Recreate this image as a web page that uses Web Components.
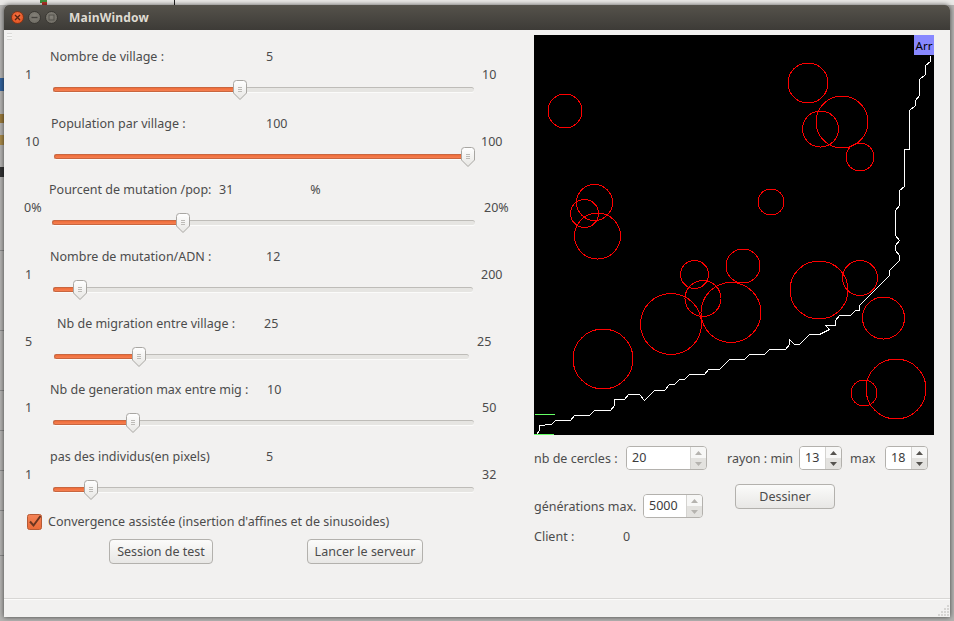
<!DOCTYPE html>
<html lang="fr">
<head>
<meta charset="utf-8">
<title>MainWindow</title>
<style>
  html, body { margin: 0; height: 100%; }
  body {
    background: #b4b3b1;
    overflow: hidden;
    font-family: "Noto Sans", "Open Sans", sans-serif;
    font-size: 12.5px;
    color: #4c4c4c;
  }
</style>
</head>
<body>
<desk-bits></desk-bits>
<app-window>
  <title-bar slot="title">MainWindow</title-bar>

  <slider-row slot="left" style="--lx:46px;--vx:262px;--mx:21px;--xx:478px;--tl:49px;--tw:421px;--th:187px">
    <span slot="label">Nombre de village :</span><span slot="value">5</span>
    <span slot="min">1</span><span slot="max">10</span>
  </slider-row>
  <slider-row slot="left" style="--lx:47px;--vx:262px;--mx:21px;--xx:477px;--tl:50px;--tw:420px;--th:414px">
    <span slot="label">Population par village :</span><span slot="value">100</span>
    <span slot="min">10</span><span slot="max">100</span>
  </slider-row>
  <slider-row slot="left" style="--lx:45px;--vx:215px;--ux:77px;--mx:20px;--xx:480px;--tl:48px;--tw:423px;--th:131px">
    <span slot="label">Pourcent de mutation /pop:</span><span slot="value">31</span><span slot="unit">%</span>
    <span slot="min">0%</span><span slot="max">20%</span>
  </slider-row>
  <slider-row slot="left" style="--lx:46px;--vx:262px;--mx:21px;--xx:477px;--tl:49px;--tw:420px;--th:27px">
    <span slot="label">Nombre de mutation/ADN :</span><span slot="value">12</span>
    <span slot="min">1</span><span slot="max">200</span>
  </slider-row>
  <slider-row slot="left" style="--lx:53px;--vx:260px;--mx:21px;--xx:473px;--tl:50px;--tw:415px;--th:85px">
    <span slot="label">Nb de migration entre village :</span><span slot="value">25</span>
    <span slot="min">5</span><span slot="max">25</span>
  </slider-row>
  <slider-row slot="left" style="--lx:46px;--vx:263px;--mx:21px;--xx:478px;--tl:49px;--tw:421px;--th:80px">
    <span slot="label">Nb de generation max entre mig :</span><span slot="value">10</span>
    <span slot="min">1</span><span slot="max">50</span>
  </slider-row>
  <slider-row slot="left" style="--lx:46px;--vx:262px;--mx:21px;--xx:478px;--tl:49px;--tw:421px;--th:38px">
    <span slot="label">pas des individus(en pixels)</span><span slot="value">5</span>
    <span slot="min">1</span><span slot="max">32</span>
  </slider-row>

  <check-box slot="left">Convergence assistée (insertion d'affines et de sinusoides)</check-box>
  <button-row slot="left">
    <gtk-button style="width:104px">Session de test</gtk-button>
    <gtk-button style="width:116px;margin-left:94px">Lancer le serveur</gtk-button>
  </button-row>

  <maze-canvas slot="right"></maze-canvas>
  <control-panel slot="right"></control-panel>
</app-window>

<script>
class DeskBits extends HTMLElement {
  constructor() {
    super();
    this.attachShadow({ mode: "open" });
    const bits = [
      [0, 0, 954, 5, "#e9e8e6"], [40, 0, 7, 3, "#3f8f3a"], [42, 2, 5, 3, "#b8342a"], [174, 0, 1, 5, "#222"],
      [0, 78, 4, 13, "#33629c"], [0, 114, 4, 9, "#9a7a3c"], [0, 135, 4, 10, "#a88a4a"], [0, 167, 4, 10, "#333"],
      [0, 250, 4, 1, "#8a8a8a"], [0, 330, 4, 1, "#8a8a8a"], [0, 390, 4, 1, "#8a8a8a"], [0, 430, 4, 1, "#8a8a8a"],
      [0, 470, 4, 1, "#8a8a8a"], [0, 510, 4, 1, "#8a8a8a"], [0, 555, 4, 1, "#8a8a8a"]
    ];
    this.shadowRoot.innerHTML = `
      <style>
        :host { position: absolute; inset: 0; display: block; }
        i { position: absolute; display: block; }
      </style>
      ${bits.map(b => `<i style="left:${b[0]}px;top:${b[1]}px;width:${b[2]}px;height:${b[3]}px;background:${b[4]}"></i>`).join("")}
    `;
  }
}

class AppWindow extends HTMLElement {
  constructor() {
    super();
    this.attachShadow({ mode: "open" });
    this.shadowRoot.innerHTML = `
      <style>
        :host {
          position: absolute;
          left: 4px;
          top: 5px;
          width: 946px;
          height: 612px;
          display: flex;
          flex-direction: column;
          background: #f2f1f0;
          border-radius: 5px 5px 0 0;
          box-shadow: 0 0 5px rgba(0, 0, 0, 0.65);
        }
        .Main {
          flex: 1;
          display: grid;
          grid-template-columns: 530px 1fr;
          position: relative;
        }
        .Left { padding-top: 17px; display: flex; flex-direction: column; }
        .Right { padding-top: 5px; display: flex; flex-direction: column; }
        .Handle {
          position: absolute;
          left: 3px;
          top: 3px;
          width: 5px;
          height: 7px;
          background: repeating-linear-gradient(#dcdbd9 0 1px, #f7f7f6 1px 3px);
        }
        .Status {
          height: 18px;
          border-top: 1px solid #d8d7d5;
          box-shadow: inset 0 1px 0 #fbfbfa;
          position: relative;
        }
        .Grip { position: absolute; right: 1px; bottom: 1px; }
      </style>
      <slot name="title"></slot>
      <div class="Main">
        <div class="Handle"></div>
        <div class="Left"><slot name="left"></slot></div>
        <div class="Right"><slot name="right"></slot></div>
      </div>
      <div class="Status">
        <svg class="Grip" width="12" height="12" fill="#d6d5d3">
          <rect x="10" y="1" width="2" height="2"/><rect x="10" y="4" width="2" height="2"/><rect x="7" y="4" width="2" height="2"/>
          <rect x="10" y="7" width="2" height="2"/><rect x="7" y="7" width="2" height="2"/><rect x="4" y="7" width="2" height="2"/>
          <rect x="10" y="10" width="2" height="2"/><rect x="7" y="10" width="2" height="2"/><rect x="4" y="10" width="2" height="2"/><rect x="1" y="10" width="2" height="2"/>
        </svg>
      </div>
    `;
  }
}

class TitleBar extends HTMLElement {
  constructor() {
    super();
    this.attachShadow({ mode: "open" });
    this.shadowRoot.innerHTML = `
      <style>
        :host {
          display: flex;
          align-items: center;
          height: 25px;
          padding-left: 7px;
          background: linear-gradient(#55524b, #3d3b37);
          border-radius: 5px 5px 0 0;
          color: #dfdbd2;
          font: bold 12px "Noto Sans", sans-serif;
          letter-spacing: 0.2px;
          box-sizing: border-box;
        }
        .Btn {
          width: 13px;
          height: 13px;
          border-radius: 50%;
          margin-right: 4px;
          box-sizing: border-box;
          display: grid;
          place-items: center;
          background: radial-gradient(circle at 50% 40%, #85827a, #6a675f);
          border: 1px solid #3a3833;
        }
        .Close { background: radial-gradient(circle at 50% 40%, #f5774a, #dd4814); border-color: #7f3519; }
        .Max { margin-right: 11px; }
        svg { display: block; }
      </style>
      <span class="Btn Close">
        <svg width="7" height="7" stroke="#5a2410" stroke-width="1.4"><path d="M1 1L6 6M6 1L1 6"/></svg>
      </span>
      <span class="Btn">
        <svg width="7" height="7" stroke="#45433e" stroke-width="1.4"><path d="M0.5 3.5H6.5"/></svg>
      </span>
      <span class="Btn Max">
        <svg width="7" height="7" fill="none" stroke="#55534c" stroke-width="1"><rect x="1" y="1" width="5" height="5"/></svg>
      </span>
      <slot></slot>
    `;
  }
}

class SliderRow extends HTMLElement {
  constructor() {
    super();
    this.attachShadow({ mode: "open" });
    this.shadowRoot.innerHTML = `
      <style>
        :host {
          display: block;
          height: 66.67px;
          box-sizing: border-box;
        }
        .Head, .Range {
          display: flex;
          height: 18px;
          line-height: 18px;
          white-space: nowrap;
        }
        .Head { padding: 1px 0 0 var(--lx); }
        .Label { width: calc(var(--vx) - var(--lx)); flex: none; }
        .Unit { margin-left: var(--ux, 0); }
        .Range { padding-left: var(--mx); }
        .Min { width: calc(var(--xx) - var(--mx)); flex: none; }
        gtk-slider { margin: -4px 0 0 var(--tl); width: var(--tw); }
      </style>
      <div class="Head">
        <div class="Label"><slot name="label"></slot></div>
        <div class="Value"><slot name="value"></slot></div>
        <div class="Unit"><slot name="unit"></slot></div>
      </div>
      <div class="Range">
        <div class="Min"><slot name="min"></slot></div>
        <div><slot name="max"></slot></div>
      </div>
      <gtk-slider></gtk-slider>
    `;
  }
}

class GtkSlider extends HTMLElement {
  constructor() {
    super();
    this.attachShadow({ mode: "open" });
    this.shadowRoot.innerHTML = `
      <style>
        :host {
          display: block;
          position: relative;
          height: 20px;
        }
        .Track {
          position: absolute;
          left: 0;
          right: 0;
          top: 7px;
          height: 5px;
          box-sizing: border-box;
          border-radius: 3px;
          background: #e6e5e2;
          border-top: 1px solid #bebcb8;
          box-shadow: 0 1px 0 #fbfbfa;
        }
        .Fill {
          position: absolute;
          left: 0;
          top: 7px;
          height: 5px;
          width: var(--th);
          box-sizing: border-box;
          border-radius: 3px 0 0 3px;
          background: linear-gradient(#ef6c38, #f58052);
          border: 1px solid #c9663f;
          border-right: 0;
        }
        svg { position: absolute; top: 0; left: calc(var(--th) - 7px); }
      </style>
      <div class="Track"></div>
      <div class="Fill"></div>
      <svg width="14" height="20">
        <defs>
          <linearGradient id="g" x1="0" y1="0" x2="0" y2="1">
            <stop offset="0" stop-color="#ffffff"/><stop offset="1" stop-color="#e7e6e3"/>
          </linearGradient>
        </defs>
        <path d="M3.5 .5H10.5Q13.5 .5 13.5 3.5V13L7 19.5L.5 13V3.5Q.5 .5 3.5 .5Z" fill="url(#g)" stroke="#a8a6a2"/>
        <path d="M5 7.5H9M5 9.5H9M5 11.5H9" stroke="#bdbbb7" fill="none"/>
      </svg>
    `;
  }
}

class CheckBox extends HTMLElement {
  constructor() {
    super();
    this.attachShadow({ mode: "open" });
    this.shadowRoot.innerHTML = `
      <style>
        :host {
          display: flex;
          align-items: center;
          height: 16px;
          margin: 0 0 9px 23px;
          gap: 6px;
          white-space: nowrap;
        }
        svg { flex: none; display: block; }
      </style>
      <svg width="15" height="16">
        <defs>
          <linearGradient id="c" x1="0" y1="0" x2="0" y2="1">
            <stop offset="0" stop-color="#f58457"/><stop offset="1" stop-color="#ea6a37"/>
          </linearGradient>
        </defs>
        <rect x=".5" y=".5" width="14" height="15" rx="2" fill="url(#c)" stroke="#b65a35"/>
        <path d="M3 7.5L6.5 11.5L13.5 2" fill="none" stroke="#6a3520" stroke-width="2"/>
      </svg>
      <slot></slot>
    `;
  }
}

class ButtonRow extends HTMLElement {
  constructor() {
    super();
    this.attachShadow({ mode: "open" });
    this.shadowRoot.innerHTML = `
      <style>
        :host { display: flex; padding-left: 105px; }
      </style>
      <slot></slot>
    `;
  }
}

class GtkButton extends HTMLElement {
  constructor() {
    super();
    this.attachShadow({ mode: "open" });
    this.shadowRoot.innerHTML = `
      <style>
        :host {
          display: flex;
          align-items: center;
          justify-content: center;
          height: 25px;
          box-sizing: border-box;
          border: 1px solid #b3b1ad;
          border-radius: 4px;
          background: linear-gradient(#fbfbfa, #e8e7e5);
          white-space: nowrap;
        }
      </style>
      <slot></slot>
    `;
  }
}

class SpinBox extends HTMLElement {
  constructor() {
    super();
    this.attachShadow({ mode: "open" });
    this.shadowRoot.innerHTML = `
      <style>
        :host {
          display: flex;
          height: 24px;
          box-sizing: border-box;
          border: 1px solid #b3b1ad;
          border-radius: 4px;
          overflow: hidden;
          color: #3c3c3c;
          flex: none;
        }
        .Text {
          flex: 1;
          background: #fff;
          line-height: 22px;
          padding-left: var(--pad, 5px);
        }
        .Arrows {
          width: 15px;
          display: flex;
          flex-direction: column;
          border-left: 1px solid #d4d3d0;
        }
        .Up, .Down { flex: 1; display: grid; place-items: center; }
        .Up { background: #f7f7f6; }
        .Down { background: #e3e2df; }
        svg { display: block; fill: var(--arrow, #b5b3af); }
      </style>
      <div class="Text"><slot></slot></div>
      <div class="Arrows">
        <div class="Up"><svg width="7" height="4"><path d="M3.5 0L7 4H0Z"/></svg></div>
        <div class="Down"><svg width="7" height="4"><path d="M0 0H7L3.5 4Z"/></svg></div>
      </div>
    `;
  }
}

class ControlPanel extends HTMLElement {
  constructor() {
    super();
    this.attachShadow({ mode: "open" });
    this.shadowRoot.innerHTML = `
      <style>
        :host { display: block; padding-top: 11px; white-space: nowrap; }
        .Line { display: flex; align-items: center; height: 24px; }
        .Lower { display: flex; }
        .Col { width: 201px; flex: none; }
        .Gens { margin-top: 24px; }
        .Client { margin-top: 9px; height: 18px; }
        .ClientLabel { width: 89px; }
        gtk-button { width: 100px; margin-top: 14px; }
      </style>
      <div class="Line">
        <span style="width:92px">nb de cercles :</span>
        <spin-box style="width:81px">20</spin-box>
        <span style="margin-left:20px;width:72px">rayon : min</span>
        <spin-box style="width:43px;--arrow:#55534f">13</spin-box>
        <span style="margin-left:8px;width:35px">max</span>
        <spin-box style="width:43px;--arrow:#55534f">18</spin-box>
      </div>
      <div class="Lower">
        <div class="Col">
          <div class="Line Gens">
            <span style="width:109px">générations max.</span>
            <spin-box style="width:60px">5000</spin-box>
          </div>
          <div class="Line Client">
            <span class="ClientLabel">Client :</span>
            <span>0</span>
          </div>
        </div>
        <gtk-button>Dessiner</gtk-button>
      </div>
    `;
  }
}

class MazeCanvas extends HTMLElement {
  constructor() {
    super();
    this.attachShadow({ mode: "open" });
    // page coordinates read off the screenshot, shifted by the canvas corner below
    const circles = [
      [565, 111, 17], [808, 83, 20], [820.5, 129, 18], [842, 122, 26], [860, 157, 14],
      [743, 266, 17], [731, 312.5, 30], [819, 290, 29], [860, 278, 17.5], [883.5, 318, 21],
      [694.5, 274.5, 14], [703, 298.5, 18], [671, 324, 30.5], [603, 359, 30], [584.5, 213.5, 14],
      [594.5, 202.5, 18], [597.5, 236, 23], [771, 202, 13], [864, 393, 13], [896, 389, 30]
    ];
    const route = [
      [536, 434], [539, 430], [539, 425], [551, 424], [555, 420], [570, 420], [574, 415], [589, 415],
      [594, 410], [610, 410], [614, 405], [614, 399], [624, 399], [628, 394], [639, 394], [644, 400],
      [654, 390], [664, 390], [669, 384], [674, 384], [679, 379], [684, 379], [689, 374], [704, 374],
      [708, 369], [719, 369], [729, 359], [744, 359], [749, 354], [764, 354], [769, 349], [785, 349],
      [789, 344], [789, 339], [794, 344], [799, 344], [809, 334], [819, 334], [829, 329], [825, 325],
      [835, 325], [835, 320], [839, 315], [850, 315], [855, 310], [859, 310], [859, 305], [889, 275],
      [889, 270], [894, 265], [899, 260], [899, 255], [895, 250], [895, 245], [899, 240], [895, 235],
      [895, 210], [899, 205], [899, 190], [904, 186], [904, 149], [909, 149], [909, 110], [915, 105],
      [915, 100], [919, 95], [919, 79], [925, 74], [925, 65], [930, 61], [930, 55]
    ];
    const ox = 534, oy = 35;
    const rings = circles.map(c =>
      `<circle cx="${c[0] - ox}" cy="${c[1] - oy}" r="${c[2]}"/>`).join("");
    const points = route.map(p => `${p[0] - ox + 0.5},${p[1] - oy + 0.5}`).join(" ");
    this.shadowRoot.innerHTML = `
      <style>
        :host {
          display: block;
          position: relative;
          width: 400px;
          height: 400px;
          background: #000;
        }
        svg { display: block; }
        .Arr {
          position: absolute;
          right: 0;
          top: 0;
          width: 20px;
          height: 20px;
          background: #8888ff;
          color: #000;
          font-size: 11.5px;
          line-height: 22px;
          text-align: center;
        }
      </style>
      <svg width="400" height="400" fill="none" shape-rendering="crispEdges">
        <g stroke="#ff0000">${rings}</g>
        <polyline points="${points}" stroke="#ffffff"/>
        <path d="M1 379.5H21M0 399.5H20" stroke="#66ff66"/>
      </svg>
      <div class="Arr">Arr</div>
    `;
  }
}

customElements.define("gtk-slider", GtkSlider);
customElements.define("desk-bits", DeskBits);
customElements.define("app-window", AppWindow);
customElements.define("title-bar", TitleBar);
customElements.define("slider-row", SliderRow);
customElements.define("check-box", CheckBox);
customElements.define("button-row", ButtonRow);
customElements.define("gtk-button", GtkButton);
customElements.define("spin-box", SpinBox);
customElements.define("control-panel", ControlPanel);
customElements.define("maze-canvas", MazeCanvas);
</script>
</body>
</html>
